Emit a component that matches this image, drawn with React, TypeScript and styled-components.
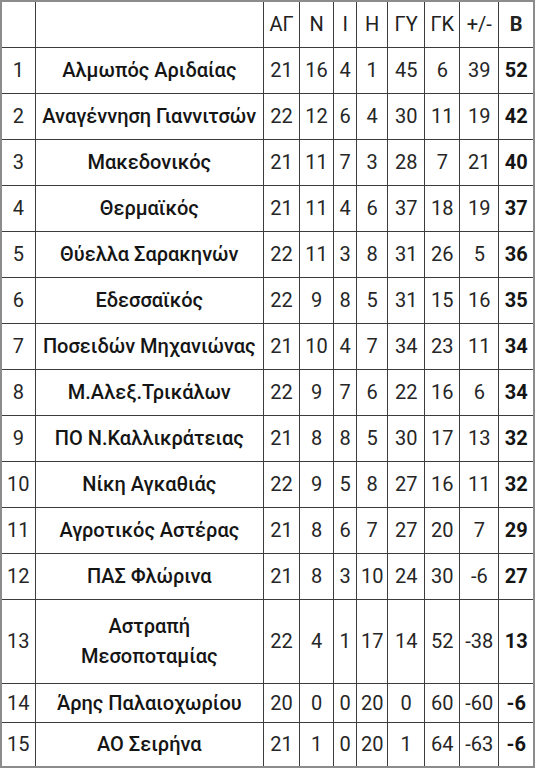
import React from "react";
import styled, { createGlobalStyle } from "styled-components";

const Global = createGlobalStyle`
  html, body { margin: 0; padding: 0; background: #ffffff; }
  body { font-family: Roboto, "Noto Sans", "Liberation Sans", sans-serif; color: #1e1e1e; }
`;

const Table = styled.table`
  border-collapse: collapse;
  table-layout: fixed;
  width: 535px;
  border: 2px solid #8c8c8c;
  font-size: 20px;
`;

const Row = styled.tr<{ $h: number }>`
  height: ${(p) => p.$h}px;
`;

const Cell = styled.td<{ $kind?: "pos" | "team" | "num" | "pts" }>`
  border: 1px solid #3c3c3c;
  padding: 0;
  text-align: center;
  vertical-align: middle;
  white-space: ${(p) => (p.$kind === "team" ? "pre-line" : "nowrap")};
  font-weight: ${(p) =>
    p.$kind === "team" ? 500 : p.$kind === "pts" ? 700 : 400};
  line-height: ${(p) => (p.$kind === "team" ? "30px" : "normal")};
  color: ${(p) => (p.$kind === "pts" || p.$kind === "team" ? "#151515" : "#262626")};
`;

const HeadCell = styled.th<{ $bold?: boolean }>`
  border: 1px solid #3c3c3c;
  padding: 0;
  text-align: center;
  vertical-align: middle;
  font-weight: ${(p) => (p.$bold ? 700 : 400)};
  color: #222;
`;

const widths = [34, 228, 36, 34, 23, 31, 37, 35, 39, 35];

type Team = [string, number, number, number, number, number, number, number, number];

const rows: Team[] = [
  ["Αλμωπός Αριδαίας", 21, 16, 4, 1, 45, 6, 39, 52],
  ["Αναγέννηση Γιαννιτσών", 22, 12, 6, 4, 30, 11, 19, 42],
  ["Μακεδονικός", 21, 11, 7, 3, 28, 7, 21, 40],
  ["Θερμαϊκός", 21, 11, 4, 6, 37, 18, 19, 37],
  ["Θύελλα Σαρακηνών", 22, 11, 3, 8, 31, 26, 5, 36],
  ["Εδεσσαϊκός", 22, 9, 8, 5, 31, 15, 16, 35],
  ["Ποσειδών Μηχανιώνας", 21, 10, 4, 7, 34, 23, 11, 34],
  ["Μ.Αλεξ.Τρικάλων", 22, 9, 7, 6, 22, 16, 6, 34],
  ["ΠΟ Ν.Καλλικράτειας", 21, 8, 8, 5, 30, 17, 13, 32],
  ["Νίκη Αγκαθιάς", 22, 9, 5, 8, 27, 16, 11, 32],
  ["Αγροτικός Αστέρας", 21, 8, 6, 7, 27, 20, 7, 29],
  ["ΠΑΣ Φλώρινα", 21, 8, 3, 10, 24, 30, -6, 27],
  ["Αστραπή\nΜεσοποταμίας", 22, 4, 1, 17, 14, 52, -38, 13],
  ["Άρης Παλαιοχωρίου", 20, 0, 0, 20, 0, 60, -60, -6],
  ["ΑΟ Σειρήνα", 21, 1, 0, 20, 1, 64, -63, -6],
];

const heights = [46, 46, 46, 46, 46, 46, 46, 46, 46, 46, 46, 46, 84, 39, 45];

const headers = ["ΑΓ", "Ν", "Ι", "Η", "ΓΥ", "ΓΚ", "+/-"];

export default function App() {
  return (
    <>
      <Global />
      <Table>
        <colgroup>
          {widths.map((w, i) => (
            <col key={i} style={{ width: w }} />
          ))}
        </colgroup>
        <thead>
          <Row $h={46}>
            <HeadCell />
            <HeadCell />
            {headers.map((h) => (
              <HeadCell key={h}>{h}</HeadCell>
            ))}
            <HeadCell $bold>Β</HeadCell>
          </Row>
        </thead>
        <tbody>
          {rows.map((r, i) => (
            <Row key={i} $h={heights[i]}>
              <Cell $kind="pos">{i + 1}</Cell>
              <Cell $kind="team">{r[0]}</Cell>
              {r.slice(1, 8).map((v, j) => (
                <Cell key={j} $kind="num">
                  {v}
                </Cell>
              ))}
              <Cell $kind="pts">{r[8]}</Cell>
            </Row>
          ))}
        </tbody>
      </Table>
    </>
  );
}
